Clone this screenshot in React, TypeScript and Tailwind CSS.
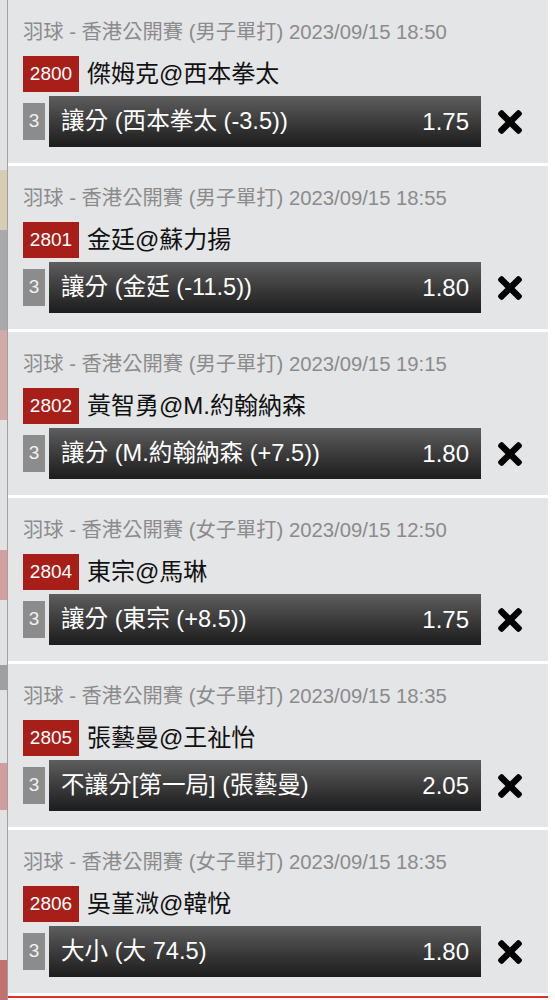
import React from "react";

type Bet = {
  event: string;
  time: string;
  code: string;
  match: string;
  pick: string;
  odds: string;
};

const bets: Bet[] = [
  { event: "男子單打", time: "2023/09/15 18:50", code: "2800", match: "傑姆克@西本拳太", pick: "讓分 (西本拳太 (-3.5))", odds: "1.75" },
  { event: "男子單打", time: "2023/09/15 18:55", code: "2801", match: "金廷@蘇力揚", pick: "讓分 (金廷 (-11.5))", odds: "1.80" },
  { event: "男子單打", time: "2023/09/15 19:15", code: "2802", match: "黃智勇@M.約翰納森", pick: "讓分 (M.約翰納森 (+7.5))", odds: "1.80" },
  { event: "女子單打", time: "2023/09/15 12:50", code: "2804", match: "東宗@馬琳", pick: "讓分 (東宗 (+8.5))", odds: "1.75" },
  { event: "女子單打", time: "2023/09/15 18:35", code: "2805", match: "張藝曼@王祉怡", pick: "不讓分[第一局] (張藝曼)", odds: "2.05" },
  { event: "女子單打", time: "2023/09/15 18:35", code: "2806", match: "吳堇溦@韓悅", pick: "大小 (大 74.5)", odds: "1.80" },
];

// blurred page peeking out at the left edge
const strip = [
  { h: 170, c: "bg-[#e2e2e2]" },
  { h: 60, c: "bg-[#d6cdb4]" },
  { h: 100, c: "bg-[#a9a9a9]" },
  { h: 90, c: "bg-[#d2aaa7]" },
  { h: 130, c: "bg-[#e2e2e2]" },
  { h: 50, c: "bg-[#d2a09d]" },
  { h: 65, c: "bg-[#e2e2e2]" },
  { h: 25, c: "bg-[#a0a0a0]" },
  { h: 73, c: "bg-[#e2e2e2]" },
  { h: 47, c: "bg-[#d09e9b]" },
  { h: 150, c: "bg-[#e2e2e2]" },
  { h: 40, c: "bg-[#c0736e]" },
];

function CloseIcon() {
  return (
    <svg viewBox="0 80 352 352" className="h-[24px] w-[24px]" fill="#000">
      <path d="M242.72 256l100.07-100.07c12.28-12.28 12.28-32.19 0-44.48l-22.24-22.24c-12.28-12.28-32.19-12.28-44.48 0L176 189.28 75.93 89.21c-12.28-12.28-32.19-12.28-44.48 0L9.21 111.45c-12.28 12.28-12.28 32.19 0 44.48L109.28 256 9.21 356.07c-12.28 12.28-12.28 32.19 0 44.48l22.24 22.24c12.28 12.28 32.2 12.28 44.48 0L176 322.72l100.07 100.07c12.28 12.28 32.2 12.28 44.48 0l22.24-22.24c12.28-12.28 12.28-32.19 0-44.48L242.72 256z" />
    </svg>
  );
}

function BetCard({ bet }: { bet: Bet }) {
  return (
    <div className="flex h-[166px] shrink-0 flex-col border-b-[3px] border-white bg-[#e4e5e7] pl-[15px]">
      <div className="mt-[22px] h-[20px] whitespace-nowrap text-[20.3px] leading-[20px] text-[#8b8b8b]">
        羽球 - 香港公開賽 ({bet.event}) {bet.time}
      </div>
      <div className="mt-[14px] flex h-[36px] items-center">
        <div className="flex h-[36px] w-[56px] items-center justify-center bg-[#a81f19] text-[19px] text-white">
          {bet.code}
        </div>
        <div className="ml-[8px] text-[24px] leading-none text-[#111]">{bet.match}</div>
      </div>
      <div className="mt-[4px] flex h-[51px] items-center">
        <div className="flex h-[37px] w-[22px] items-center justify-center bg-[#8c8c8c] text-[19px] text-[#f2f2f2]">
          3
        </div>
        <div className="ml-[4px] flex h-[51px] w-[432px] items-center justify-between bg-gradient-to-b from-[#5e5e5e] to-[#1d1d1d] px-[12px] text-white">
          <span className="text-[23.6px] leading-none">{bet.pick}</span>
          <span className="text-[24px] leading-none">{bet.odds}</span>
        </div>
        <div className="ml-[17px] flex items-center">
          <CloseIcon />
        </div>
      </div>
    </div>
  );
}

export default function App() {
  return (
    <div
      className="flex h-[1000px] w-[555px] overflow-hidden bg-white"
      style={{ fontFamily: '"Liberation Sans", "Noto Sans CJK TC", sans-serif' }}
    >
      <div className="flex w-[8px] shrink-0 flex-col border-r border-[#a0a0a0]">
        {strip.map((s, i) => (
          <div key={i} className={`shrink-0 ${s.c}`} style={{ height: s.h }} />
        ))}
      </div>
      <div className="flex w-[540px] shrink-0 flex-col">
        {bets.map((b) => (
          <BetCard key={b.code} bet={b} />
        ))}
        <div className="h-[10px] shrink-0 border-t-2 border-[#e0302a] bg-white" />
      </div>
    </div>
  );
}
